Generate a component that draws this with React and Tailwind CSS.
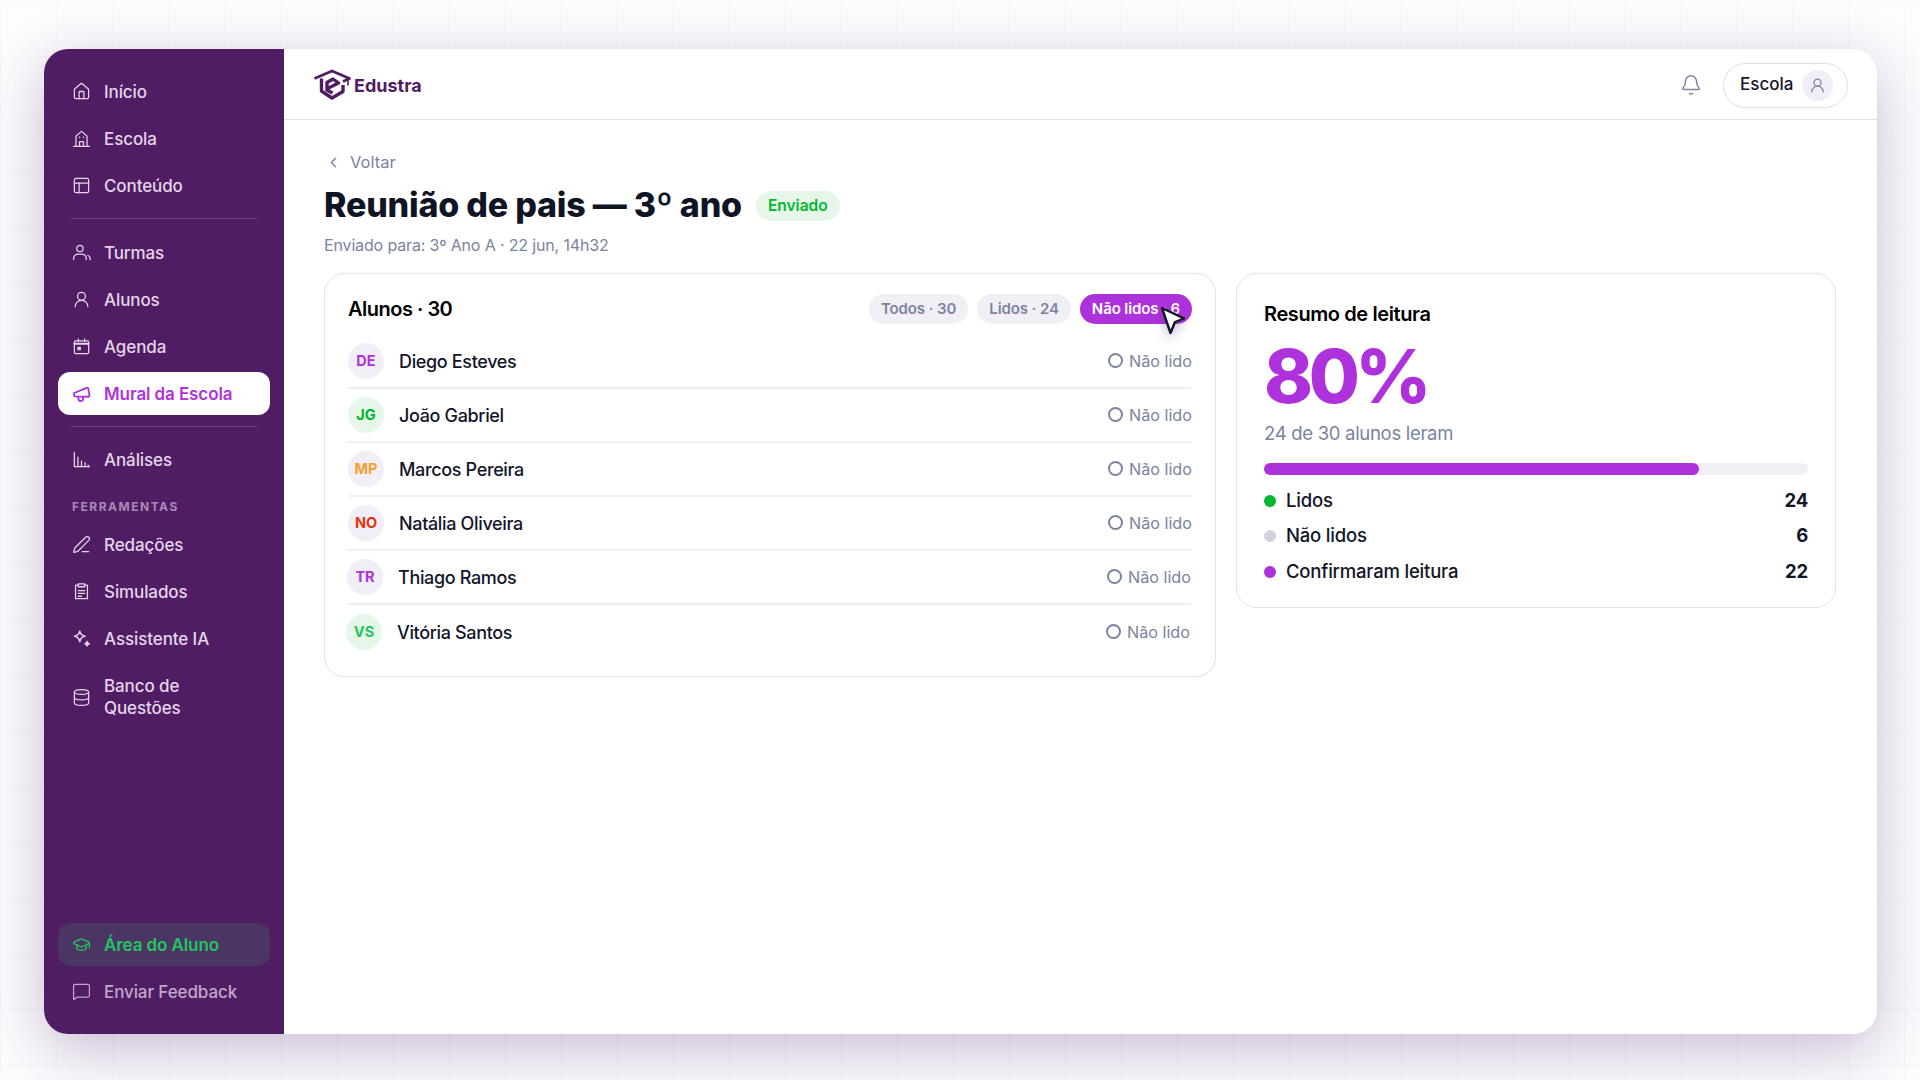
import {
  Bell,
  ChevronLeft,
  Database,
  GraduationCap,
  House,
  MessageSquare,
  PanelsTopLeft,
  PenLine,
  UserRound,
} from "lucide-react";

function SchoolIcon(props) {
  return (
    <svg viewBox="0 0 24 24" fill="none" stroke="currentColor" strokeWidth="1.6" strokeLinecap="round" strokeLinejoin="round" {...props}>
      <path d="M2 22h20" />
      <path d="M5 22V9l7-6 7 6v13" />
      <path d="M9.500 22v-6h5v6" />
      <path d="M9.500 10.500h.01M14.500 10.500h.01" strokeWidth="2" />
    </svg>
  );
}

function AgendaIcon(props) {
  return (
    <svg viewBox="0 0 24 24" fill="none" stroke="currentColor" strokeWidth="1.6" strokeLinecap="round" strokeLinejoin="round" {...props}>
      <rect x="3" y="5" width="18" height="16" rx="1.500" />
      <path d="M3 8.500h18" strokeWidth="2.400" />
      <path d="M8 2.500v3M16 2.500v3" />
      <rect x="7.500" y="13" width="3" height="3" fill="currentColor" />
    </svg>
  );
}

function ChartIcon(props) {
  return (
    <svg viewBox="0 0 24 24" fill="none" stroke="currentColor" strokeWidth="1.5" strokeLinecap="round" {...props}>
      <path d="M3 3v18h19" />
      <path d="M7.500 21V9M12 21v-7M16.500 21v-5M20.500 21v-2" />
    </svg>
  );
}

function ExamIcon(props) {
  return (
    <svg viewBox="0 0 24 24" fill="none" stroke="currentColor" strokeWidth="1.6" strokeLinecap="round" strokeLinejoin="round" {...props}>
      <path d="M8 4H4.500v17h15V4H16" />
      <path d="M8 2.500h8v3.500H8z" />
      <path d="M8 11h8M8 14.500h8M8 18h4" />
    </svg>
  );
}

function GroupIcon(props) {
  return (
    <svg viewBox="0 0 24 24" fill="none" stroke="currentColor" strokeWidth="1.6" strokeLinecap="round" strokeLinejoin="round" {...props}>
      <circle cx="10" cy="7" r="4" />
      <path d="M2 21v-1.500A5.500 5.500 0 0 1 7.500 14h5a5.500 5.500 0 0 1 5.500 5.500V21" />
      <path d="M23 21v-1c0-2-1-3.500-3-4.500" />
    </svg>
  );
}

function HornIcon(props) {
  return (
    <svg viewBox="0 0 24 24" fill="none" stroke="currentColor" strokeLinecap="round" strokeLinejoin="round" {...props} strokeWidth="2.300">
      <g transform="rotate(-10 12 12)">
        <path d="M2.500 10v4l17 3.500c1 .2 2-.5 2-1.500V7.500c0-1-1-1.700-2-1.500z" />
        <path d="M7 15.500v2.500a3 3 0 0 0 6 .5v-1.500" />
      </g>
    </svg>
  );
}

function StarsIcon(props) {
  return (
    <svg viewBox="1 1 22 22" fill="none" stroke="currentColor" strokeLinejoin="round" {...props} strokeWidth="1.800">
      <path d="M10 3.500c.8 3.500 2.500 5.200 6 6-3.500.8-5.200 2.500-6 6-.8-3.500-2.500-5.200-6-6 3.500-.8 5.200-2.500 6-6z" />
      <path d="M18.500 15.500c.3 1.600 1 2.300 2.500 2.500-1.500.3-2.200 1-2.500 2.500-.3-1.500-1-2.200-2.500-2.500 1.500-.2 2.200-.9 2.500-2.500z" fill="currentColor" />
    </svg>
  );
}

function Logo() {
  return (
    <svg viewBox="0 0 38 32" className="h-8 w-[38px] text-[#501c64]" fill="none" stroke="currentColor" strokeWidth="3.400">
      <path d="M1.500 9.500 19 2l17.500 7.500-6.500 3" strokeWidth="2.800" strokeLinejoin="round" />
      <path d="M8.500 9.500V22L19 29l11-6.500V16" strokeLinejoin="round" />
      <path d="M14.500 19.500 25.500 14 20 10l-6 3.500V21l5.500 3" strokeLinejoin="round" />
      <path d="M35 10v6.500" strokeWidth="1.600" />
    </svg>
  );
}

function NavItem({ icon: Icon, label, active, highlight, muted }) {
  let look = "text-[#e3d6e8]";
  if (active) look = "bg-white text-[#ae32dc] font-semibold";
  if (highlight) look = "bg-[#4b3565] text-[#22c55e] font-semibold";
  if (muted) look = "text-[#bfa8c9]";
  return (
    <div className={`flex h-[43px] items-center gap-[13px] rounded-xl pl-[14px] pr-2 text-[17px] leading-[22px] tracking-[-0.1px] ${look}`}>
      <Icon className="h-[19px] w-[19px] shrink-0" strokeWidth={1.6} />
      <span>{label}</span>
    </div>
  );
}

function Sidebar() {
  return (
    <aside className="flex w-[240px] shrink-0 flex-col bg-[#501c64] px-[14px] pb-[21px] pt-[21px] font-medium">
      <div className="flex flex-col gap-1">
        <NavItem icon={House} label="Início" />
        <NavItem icon={SchoolIcon} label="Escola" />
        <NavItem icon={PanelsTopLeft} label="Conteúdo" />
      </div>
      <div className="mx-[12px] mb-[12px] mt-[11px] h-px bg-[#6b3a80]" />
      <div className="flex flex-col gap-1">
        <NavItem icon={GroupIcon} label="Turmas" />
        <NavItem icon={UserRound} label="Alunos" />
        <NavItem icon={AgendaIcon} label="Agenda" />
        <NavItem icon={HornIcon} label="Mural da Escola" active />
      </div>
      <div className="mx-[12px] my-[11px] h-px bg-[#6b3a80]" />
      <NavItem icon={ChartIcon} label="Análises" />
      <div className="mb-[8px] mt-[18px] pl-[14px] text-[12px] font-bold leading-[16px] tracking-[1.500px] text-[#a88bb5]">FERRAMENTAS</div>
      <div className="flex flex-col gap-1">
        <NavItem icon={PenLine} label="Redações" />
        <NavItem icon={ExamIcon} label="Simulados" />
        <NavItem icon={StarsIcon} label="Assistente IA" />
      </div>
      <div className="mt-[15px] flex items-center gap-[13px] pl-[14px] text-[17px] leading-[22px] tracking-[-0.1px] text-[#e3d6e8]">
        <Database className="h-[19px] w-[19px] shrink-0" strokeWidth={1.6} />
        <span>Banco de<br />Questões</span>
      </div>
      <div className="mt-auto flex flex-col gap-1">
        <NavItem icon={GraduationCap} label="Área do Aluno" highlight />
        <NavItem icon={MessageSquare} label="Enviar Feedback" muted />
      </div>
    </aside>
  );
}

const students = [
  { initials: "DE", name: "Diego Esteves", bg: "bg-[#f1eef7]", fg: "text-[#ae32dc]" },
  { initials: "JG", name: "João Gabriel", bg: "bg-[#e6f7ea]", fg: "text-[#00b82e]" },
  { initials: "MP", name: "Marcos Pereira", bg: "bg-[#f1eef7]", fg: "text-[#f59e2c]" },
  { initials: "NO", name: "Natália Oliveira", bg: "bg-[#f1eef7]", fg: "text-[#e0360a]" },
  { initials: "TR", name: "Thiago Ramos", bg: "bg-[#f1eef7]", fg: "text-[#ae32dc]", shift: "-translate-x-px" },
  { initials: "VS", name: "Vitória Santos", bg: "bg-[#e6f7ea]", fg: "text-[#22c55e]", shift: "-translate-x-[2px]" },
];

function StudentRow({ student, last }) {
  return (
    <div className={`flex h-[54px] items-center justify-between ${last ? "" : "border-b-2 border-[#f0eff5]"}`}>
      <div className={`flex items-center gap-[15px] ${student.shift || ""}`}>
        <div className={`flex h-[36px] w-[36px] items-center justify-center rounded-full text-[14.500px] font-bold ${student.bg} ${student.fg}`}>
          {student.initials}
        </div>
        <span className="text-[18px] font-medium tracking-[-0.35px] text-[#12152a]">{student.name}</span>
      </div>
      <div className={`flex items-center gap-[6px] text-[16.200px] text-[#7a849e] ${student.shift || ""}`}>
        <span className="h-[15px] w-[15px] rounded-full border-2 border-[#7a849e]" />
        Não lido
      </div>
    </div>
  );
}

function Chip({ label, active }) {
  return (
    <div className={`flex h-[30px] items-center rounded-full px-[12px] text-[15px] font-semibold tracking-[-0.1px] ${active ? "bg-[#ae32dc] text-white" : "bg-[#f1eff6] text-[#7a849e]"}`}>
      {label}
    </div>
  );
}

function LegendRow({ dot, label, value }) {
  return (
    <div className="flex h-[35.500px] items-center justify-between text-[18.500px] tracking-[-0.2px]">
      <div className="flex items-center gap-[10px] font-medium text-[#12152a]">
        <span className={`h-[12px] w-[12px] rounded-full ${dot}`} />
        {label}
      </div>
      <span className="font-bold text-[#12152a]">{value}</span>
    </div>
  );
}

export default function App() {
  return (
    <div
      className="h-[1080px] w-[1920px] overflow-hidden bg-[#fdfcfe] bg-[linear-gradient(#f7f6f9_1px,transparent_1px),linear-gradient(90deg,#f7f6f9_1px,transparent_1px)] bg-[size:56px_56px] pl-[44px] pt-[49px]"
      style={{ fontFamily: "Inter, 'Noto Sans', sans-serif" }}
    >
      <div className="flex h-[985px] w-[1833px] overflow-hidden rounded-[24px] bg-white shadow-[0_16px_60px_rgba(80,40,110,0.3)]">
        <Sidebar />
        <main className="flex min-w-0 flex-1 flex-col">
          <header className="flex h-[71px] shrink-0 items-center justify-between border-b border-[#e3e1ec] pl-[29px] pr-[29px] pt-[2px]">
            <div className="flex items-center gap-[3px]">
              <Logo />
              <span className="text-[18px] font-bold text-[#501c64]">Edustra</span>
            </div>
            <div className="flex items-center gap-[21px]">
              <Bell className="h-[22px] w-[22px] text-[#7a849e]" strokeWidth={1.6} />
              <div className="flex h-[45px] w-[125px] items-center justify-between rounded-full border border-[#e0deea] pl-[16px] pr-[14px]">
                <span className="text-[17px] font-medium text-[#12152a]">Escola</span>
                <div className="flex h-[31px] w-[31px] items-center justify-center rounded-full bg-[#f1eef7]">
                  <UserRound className="h-[17px] w-[17px] text-[#7a849e]" strokeWidth={1.8} />
                </div>
              </div>
            </div>
          </header>
          <div className="flex-1 px-[40px] pt-[30px]">
            <div className="flex h-[24px] items-center gap-[8px] pl-[1px] text-[16.500px] text-[#7a849e]">
              <ChevronLeft className="h-[17px] w-[17px]" strokeWidth={2} />
              Voltar
            </div>
            <div className="mt-[10px] flex h-[40px] items-center gap-[14px]">
              <h1 className="text-[34px] font-extrabold tracking-[-0.2px] text-[#101526]">Reunião de pais — 3º ano</h1>
              <span className="mt-[3px] flex h-[30px] items-center rounded-full bg-[#e6f7ea] px-[12px] text-[15.500px] font-semibold text-[#00b82e]">Enviado</span>
            </div>
            <p className="mt-[9px] h-[24px] text-[16px] leading-[24px] tracking-[-0.15px] text-[#7a849e]">Enviado para: 3º Ano A · 22 jun, 14h32</p>
            <div className="mt-[16px] flex items-start gap-[20px]">
              <section className="relative h-[404px] w-[892px] shrink-0 rounded-[20px] border border-[#e3e1ec] px-[23px] pt-[20px]">
                <div className="flex h-[30px] items-center justify-between">
                  <h2 className="text-[20px] font-semibold tracking-[-0.5px] text-black">Alunos · 30</h2>
                  <div className="flex gap-[9px]">
                    <Chip label="Todos · 30" />
                    <Chip label="Lidos · 24" />
                    <Chip label="Não lidos · 6" active />
                  </div>
                </div>
                <div className="mt-[11px]">
                  {students.map((s, i) => (
                    <StudentRow key={s.initials} student={s} last={i === students.length - 1} />
                  ))}
                </div>
                <svg viewBox="0 0 26 30" className="absolute left-[835px] top-[32px] h-[30px] w-[26px] drop-shadow-[0_4px_6px_rgba(80,40,110,0.35)]">
                  <path d="M2 2 24 12.500 15 16 10.500 27z" fill="white" stroke="#12152a" strokeWidth="2.400" strokeLinejoin="round" />
                </svg>
              </section>
              <section className="h-[335px] w-[600px] shrink-0 rounded-[20px] border border-[#e3e1ec] px-[27px] pt-[26px]">
                <h2 className="text-[20px] font-semibold leading-[28px] tracking-[-0.4px] text-black">Resumo de leitura</h2>
                <div className="mt-[8px] h-[80px] text-[74px] font-extrabold leading-[80px] tracking-[-4.500px] text-[#ae32dc]">80%</div>
                <p className="mt-[3px] h-[28px] text-[18.500px] leading-[28px] tracking-[-0.3px] text-[#7a849e]">24 de 30 alunos leram</p>
                <div className="mt-[16px] h-[12px] w-full rounded-full bg-[#f1eff6]">
                  <div className="h-full rounded-full bg-[#ae32dc]" style={{ width: "80%" }} />
                </div>
                <div className="mt-[8px]">
                  <LegendRow dot="bg-[#00b82e]" label="Lidos" value="24" />
                  <LegendRow dot="bg-[#d8cfe0]" label="Não lidos" value="6" />
                  <LegendRow dot="bg-[#ae32dc]" label="Confirmaram leitura" value="22" />
                </div>
              </section>
            </div>
          </div>
        </main>
      </div>
    </div>
  );
}
